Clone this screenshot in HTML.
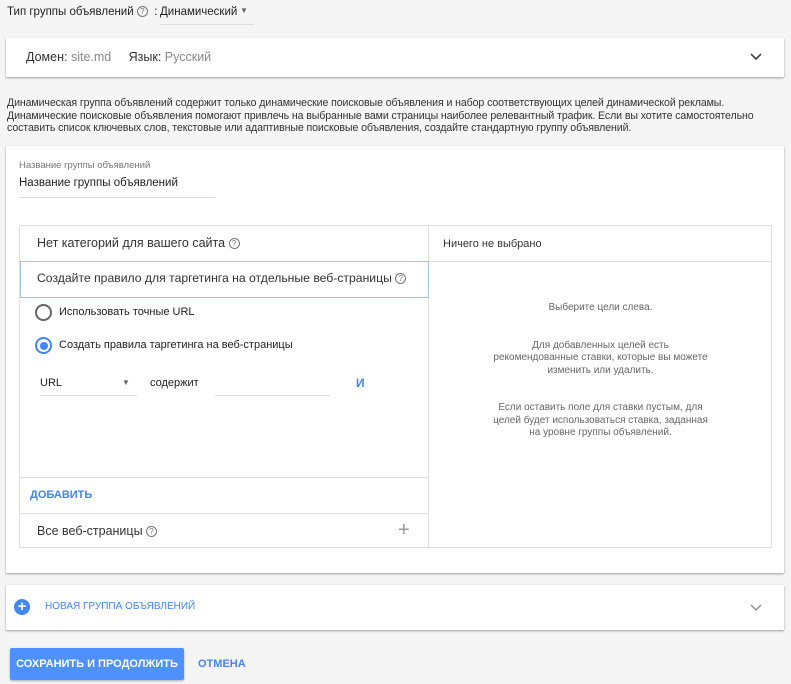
<!DOCTYPE html>
<html><head><meta charset="utf-8"><style>
*{box-sizing:border-box;margin:0;padding:0}
body{width:791px;height:684px;background:#f5f5f5;font-family:"Liberation Sans",sans-serif;color:#212121;position:relative;overflow:hidden;font-size:12px}
.abs{position:absolute;white-space:nowrap}
.card{position:absolute;background:#fff;box-shadow:0 1px 2px rgba(0,0,0,.35)}
.q{display:inline-block;width:11px;height:11px;border:1px solid #777;border-radius:50%;font-size:8px;line-height:9px;text-align:center;color:#777;vertical-align:1px}
.blue{color:#4285f4}
</style></head><body>
<div class="abs" style="left:7px;top:6px;font-size:11.5px">Тип группы объявлений <span class="q">?</span> &nbsp;:</div>
<div class="abs" style="left:160px;top:0;font-size:11.5px;width:94px;height:25px;border-bottom:1px solid #ddd;padding-top:6px">Динамический<span class="abs" style="left:80px;top:6px;font-size:8px;color:#666">▼</span></div>

<div class="card" style="left:6px;top:38px;width:778px;height:39px">
 <div class="abs" style="left:20px;top:12px;font-size:12.5px;color:#333">Домен: <span style="color:#888">site.md</span>&nbsp;&nbsp;&nbsp;&nbsp; Язык: <span style="color:#888">Русский</span></div>
 <svg class="abs" style="left:744px;top:14px" width="12" height="10"><path d="M1 2 L6 7 L11 2" stroke="#444" stroke-width="1.6" fill="none"/></svg>
</div>

<div class="abs" style="left:7px;top:97px;font-size:10.6px;line-height:12.5px;color:#333;letter-spacing:-0.1px">Динамическая группа объявлений содержит только динамические поисковые объявления и набор соответствующих целей динамической рекламы.<br>Динамические поисковые объявления помогают привлечь на выбранные вами страницы наиболее релевантный трафик. Если вы хотите самостоятельно<br>составить список ключевых слов, текстовые или адаптивные поисковые объявления, создайте стандартную группу объявлений.</div>

<div class="card" style="left:6px;top:146px;width:778px;height:427px">
 <div class="abs" style="left:13px;top:14px;font-size:9.5px;color:#777">Название группы объявлений</div>
 <div class="abs" style="left:13px;top:31px;font-size:11.5px;width:196px;height:21px;border-bottom:1px solid #ddd">Название группы объявлений</div>
 <div class="abs" style="left:13px;top:79px;width:753px;height:323px;border:1px solid #e0e0e0">
  <div class="abs" style="left:408px;top:0;width:1px;height:321px;background:#e0e0e0"></div>
  <div class="abs" style="left:408px;top:35px;width:344px;height:1px;background:#e0e0e0"></div>
  <div class="abs" style="left:17px;top:10px;font-size:12.5px;color:#333">Нет категорий для вашего сайта <span class="q">?</span></div>
  <div class="abs" style="left:423px;top:12px;font-size:11px;color:#333">Ничего не выбрано</div>
  <div class="abs" style="left:0;top:35px;width:409px;height:37px;border:1px solid #a6c1f3"></div>
  <div class="abs" style="left:17px;top:45px;font-size:12.2px;color:#333">Создайте правило для таргетинга на отдельные веб-страницы <span class="q">?</span></div>
  <div class="abs" style="left:15px;top:78px;width:17px;height:17px;border:2px solid #666;border-radius:50%"></div>
  <div class="abs" style="left:39px;top:80px;font-size:11px">Использовать точные URL</div>
  <div class="abs" style="left:15px;top:111px;width:17px;height:17px;border:2px solid #4285f4;border-radius:50%"><div style="margin:2.5px;width:8px;height:8px;background:#4285f4;border-radius:50%"></div></div>
  <div class="abs" style="left:39px;top:113px;font-size:11px">Создать правила таргетинга на веб-страницы</div>
  <div class="abs" style="left:20px;top:151px;width:97px;height:19px;border-bottom:1px solid #ddd;font-size:11px">URL<span class="abs" style="left:82px;top:1px;font-size:8px;color:#666">▼</span></div>
  <div class="abs" style="left:130px;top:151px;font-size:11px">содержит</div>
  <div class="abs" style="left:195px;top:151px;width:115px;height:19px;border-bottom:1px solid #ddd"></div>
  <div class="abs blue" style="left:336px;top:150px;font-size:12px;font-weight:bold">И</div>
  <div class="abs" style="left:0;top:251px;width:408px;height:1px;background:#e0e0e0"></div>
  <div class="abs blue" style="left:10px;top:263px;font-size:11px;font-weight:bold">ДОБАВИТЬ</div>
  <div class="abs" style="left:0;top:287px;width:408px;height:1px;background:#e0e0e0"></div>
  <div class="abs" style="left:17px;top:298px;font-size:12.5px;color:#333">Все веб-страницы <span class="q">?</span></div>
  <div class="abs" style="left:378px;top:293px;font-size:20px;color:#999;font-weight:300">+</div>
  <div class="abs" style="left:409px;top:76px;width:343px;text-align:center;font-size:10px;line-height:12.5px;color:#666">Выберите цели слева.<br><br><br>Для добавленных целей есть<br>рекомендованные ставки, которые вы можете<br>изменить или удалить.<br><br><br>Если оставить поле для ставки пустым, для<br>целей будет использоваться ставка, заданная<br>на уровне группы объявлений.</div>
 </div>
</div>

<div class="card" style="left:6px;top:585px;width:778px;height:45px">
 <div class="abs" style="left:8px;top:14px;width:16px;height:16px;border-radius:50%;background:#4285f4;color:#fff;font-weight:bold;font-size:15px;line-height:16px;text-align:center">+</div>
 <div class="abs blue" style="left:39px;top:16px;font-size:10px">НОВАЯ ГРУППА ОБЪЯВЛЕНИЙ</div>
 <svg class="abs" style="left:744px;top:18px" width="12" height="10"><path d="M1 2 L6 7 L11 2" stroke="#888" stroke-width="1.3" fill="none"/></svg>
</div>

<div class="abs" style="left:10px;top:648px;width:174px;height:32px;background:#4d90fe;border-radius:2px;box-shadow:0 1px 2px rgba(0,0,0,.3);color:#fff;font-size:11px;font-weight:bold;line-height:32px;text-align:center">СОХРАНИТЬ И ПРОДОЛЖИТЬ</div>
<div class="abs blue" style="left:198px;top:658px;font-size:11px;font-weight:bold">ОТМЕНА</div>
</body></html>
